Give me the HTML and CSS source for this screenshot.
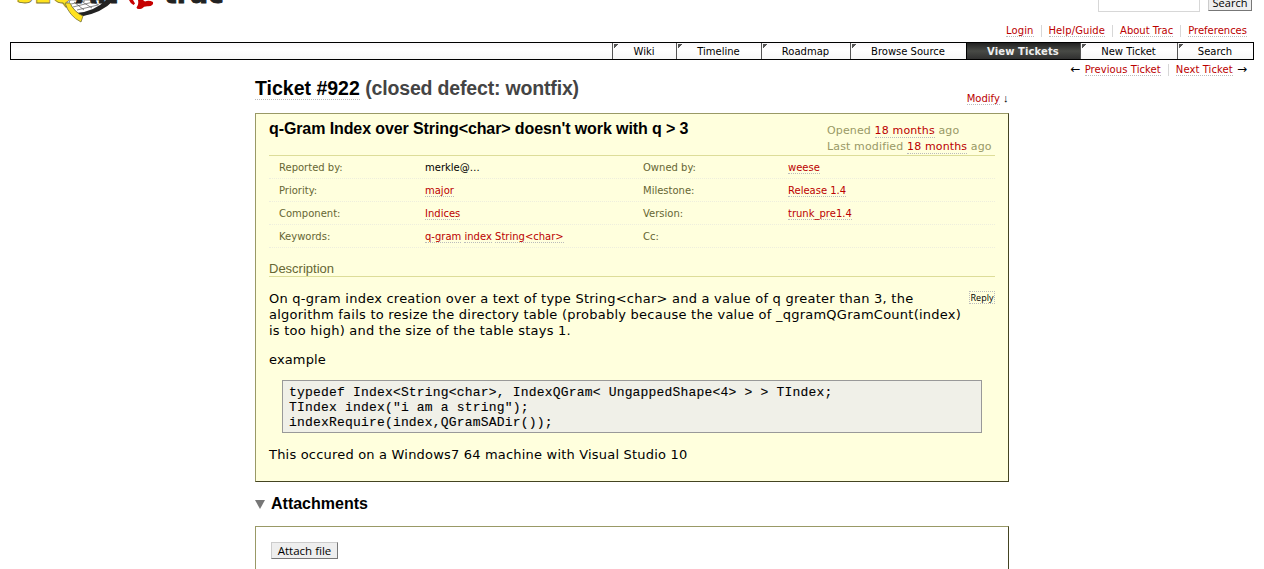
FILE: index.html
```html
<!DOCTYPE html>
<html lang="en">
<head>
<meta charset="utf-8">
<title>#922 (q-Gram Index over String&lt;char&gt; doesn't work with q &gt; 3)</title>
<link rel="stylesheet" href="styles.css">
</head>
<body>
<header class="banner">
  <svg class="logo" width="240" height="24" viewBox="0 0 240 24">
    <path d="M69 3Q73 10 81 16Q98 12 112 0H70Z" fill="#fff" stroke="#444" stroke-width=".6"/>
    <path d="M71 4L85 1M73 7L93 2M77 10L98 5M74 2L84 10M81 1L92 8M90 1L99 5" stroke="#555" stroke-width=".7" fill="none"/>
    <path d="M114 0Q102 13 81 16.5L76 13Q94 12 106 0Z" fill="#222"/>
    <text class="logo-seq" x="16" y="3" textLength="57" lengthAdjust="spacingAndGlyphs">SEQ</text>
    <text class="logo-an" x="76" y="3" textLength="43" lengthAdjust="spacingAndGlyphs">AN</text>
    <path d="M65 3Q69 16 81 22L83 16Q74 12 70 3Z" fill="#ffe21f" stroke="#77733c" stroke-width=".8"/>
    <path d="M129 0H133L135 3.5L133.5 5Q130 3 129 0ZM138 0H143L145 1.5Q149 0 153 2Q154 6 148 6.3Q144 6 142 8.5Q137 10 136.5 7.5Q139 4 138 0Z" fill="#c60000"/>
    <text class="logo-trac" x="164" y="3" textLength="60" lengthAdjust="spacingAndGlyphs">trac</text>
  </svg>
  <form class="search">
    <input class="field" type="text" aria-label="Search terms">
    <button class="button" type="button">Search</button>
  </form>
</header>
<nav class="metanav">
  <span class="item"><a href="#">Login</a></span><span class="item"><a href="#">Help/Guide</a></span><span class="item"><a href="#">About Trac</a></span><span class="item"><a href="#">Preferences</a></span>
</nav>
<nav class="mainnav">
  <a class="tab wiki" href="#">Wiki</a><a class="tab timeline" href="#">Timeline</a><a class="tab roadmap" href="#">Roadmap</a><a class="tab browse" href="#">Browse Source</a><a class="tab active" href="#">View Tickets</a><a class="tab new" href="#">New Ticket</a><a class="tab find" href="#">Search</a>
</nav>
<nav class="ctxtnav">
  <span class="item"><i class="arrow">←</i> <a href="#">Previous Ticket</a></span><span class="item"><a href="#">Next Ticket</a> <i class="arrow">→</i></span>
</nav>
<main class="content">
  <div class="heading">
    <h1><a href="#">Ticket #922</a> <span class="status">(closed defect: wontfix)</span></h1>
    <div class="modify"><a href="#">Modify</a> <i class="arrow down">↓</i></div>
  </div>
  <section class="ticket">
    <div class="summary">
      <h2>q-Gram Index over String&lt;char&gt; doesn't work with q &gt; 3</h2>
      <div class="date">
        <p>Opened <a href="#">18 months</a> ago</p>
        <p>Last modified <a href="#">18 months</a> ago</p>
      </div>
    </div>
    <div class="properties">
      <div class="row"><span class="label">Reported by:</span><span>merkle@…</span><span class="label">Owned by:</span><span><a href="#">weese</a></span></div>
      <div class="row"><span class="label">Priority:</span><span><a href="#">major</a></span><span class="label">Milestone:</span><span><a href="#">Release 1.4</a></span></div>
      <div class="row"><span class="label">Component:</span><span><a href="#">Indices</a></span><span class="label">Version:</span><span><a href="#">trunk_pre1.4</a></span></div>
      <div class="row"><span class="label">Keywords:</span><span><a href="#">q-gram</a> <a href="#">index</a> <a href="#">String&lt;char&gt;</a></span><span class="label">Cc:</span><span></span></div>
    </div>
    <h3>Description</h3>
    <div class="description">
      <p class="intro">On q-gram index creation over a text of type String&lt;char&gt; and a value of q greater than 3, the<br>algorithm fails to resize the directory table (probably because the value of _qgramQGramCount(index)<br>is too high) and the size of the table stays 1.</p>
      <button class="reply" type="button">Reply</button>
    </div>
    <p class="example">example</p>
    <pre class="code">typedef Index&lt;String&lt;char&gt;, IndexQGram&lt; UngappedShape&lt;4&gt; &gt; &gt; TIndex;
TIndex index("i am a string");
indexRequire(index,QGramSADir());</pre>
    <p class="closing">This occured on a Windows7 64 machine with Visual Studio 10</p>
  </section>
  <h2 class="attachments-title"><svg width="10" height="9" viewBox="0 0 10 9"><path d="M0 0H10L5 9Z" fill="#777"/></svg>Attachments</h2>
  <section class="attachments"><button class="button attach" type="button">Attach file</button></section>
</main>
</body>
</html>
```
FILE: styles.css
```css
* { box-sizing: border-box; }
html { overflow: hidden; }
body {
  margin: 0;
  height: 569px;
  overflow: hidden;
  background: #fff;
  color: #000;
  font: 13px/16px Verdana, "DejaVu Sans", sans-serif;
}
h1, h2, h3, p, pre { margin: 0; }
a { color: #b00; text-decoration: none; border-bottom: 1px dotted #bbb; }
.arrow { display: inline-block; width: 11px; font-style: normal; font-size: 12px; line-height: 10px; color: #000; }
.down { width: 6px; font: 11px/10px "Liberation Sans", sans-serif; }

.banner { display: flex; justify-content: space-between; align-items: flex-start; height: 25px; padding-right: 12px; }
.logo { display: block; overflow: hidden; }
.logo text { font: bold 28px "DejaVu Sans", sans-serif; fill: #222; stroke: #222; stroke-width: .8px; }
.logo .logo-seq { fill: #ffe21f; stroke: #77733c; }
.search { display: flex; align-items: flex-start; gap: 8px; margin-top: -6px; }
.field { width: 102px; height: 18px; border: 1px solid #d7d7d7; padding: 0; background: #fff; }
.button {
  height: 17px;
  padding: 0;
  border: 1px solid #ccc;
  border-right-color: #777;
  border-bottom-color: #777;
  background: #eee;
  color: #000;
  font: 11px/15px "Open Sans", "Noto Sans", sans-serif;
  text-align: center;
  white-space: nowrap;
}
.search .button { width: 44px; }

.metanav, .ctxtnav { display: flex; justify-content: flex-end; font-size: 10px; line-height: 12px; }
.metanav { height: 17px; padding-right: 17px; }
.metanav .item:first-child { letter-spacing: .1px; }
.metanav .item:nth-child(2) { letter-spacing: .1px; }
.item { height: 12px; white-space: nowrap; padding: 0 7px; border-right: 1px solid #d7d7d7; }
.item:last-child { padding-right: 0; border-right: 0; }
.ctxtnav { padding: 4px 16px 0 0; height: 20px; }
.ctxtnav a { letter-spacing: .08px; }
.ctxtnav .item:last-child .arrow { margin-left: 1px; }

.mainnav {
  display: flex;
  justify-content: flex-end;
  height: 18px;
  margin: 0 10px;
  border: 1px solid #000;
  background: linear-gradient(#faf8fa, #fff 40%, #f7f7f7);
  font-size: 10px;
  line-height: 17px;
}
.tab {
  height: 16px;
  padding-right: 1px;
  border: 0;
  border-left: 1px solid #555;
  color: #000;
  text-align: center;
  white-space: nowrap;
  background: linear-gradient(135deg, #555 3px, transparent 3.5px) 1px 1px / 5px 5px no-repeat;
}
.wiki { width: 64px; }
.timeline { width: 85px; }
.roadmap { width: 89px; }
.browse { width: 116px; }
.active { width: 114px; border-left-color: #000; background: linear-gradient(#222, #484a46 50%, #303030); color: #eee; font-weight: bold; letter-spacing: .1px; }
.new { width: 97px; }
.find { width: 76px; }

.content { width: 754px; margin-left: 255px; }
.heading { display: flex; justify-content: space-between; height: 33px; }
h1 { font: bold 19.5px/22px Arial, "Liberation Sans", sans-serif; margin-top: -3px; white-space: nowrap; }
h1 a { color: #000; }
.status { color: #444; letter-spacing: -.17px; }
.modify { font-size: 10px; line-height: 12px; margin-top: 13px; white-space: nowrap; }

.ticket {
  height: 369px;
  padding: 6px 13px 0;
  border: 1px solid #996;
  border-right-color: #442;
  border-bottom-color: #442;
  background: #ffd;
}
.summary { display: flex; justify-content: space-between; height: 36px; border-bottom: 1px solid #dd9; }
.summary h2 { font: bold 16px/18px Arial, "Liberation Sans", sans-serif; letter-spacing: -.1px; white-space: nowrap; }
.date { width: 168px; padding-top: 3px; font-size: 11px; line-height: 16px; letter-spacing: .14px; color: #996; white-space: nowrap; }
.row {
  display: grid;
  grid-template-columns: 146px 218px 145px 1fr;
  height: 23px;
  padding: 6px 0 0 10px;
  border-bottom: 1px dotted #eed;
  font-size: 10px;
  line-height: 12px;
}
.label { color: #663; }
h3 { margin-top: 12px; height: 17px; border-bottom: 1px solid #dd9; color: #663; font: 13px/18px Arial, "Liberation Sans", sans-serif; }
.description { display: flex; justify-content: space-between; align-items: flex-start; padding-top: 14px; }
.intro { white-space: nowrap; letter-spacing: .24px; }
.reply { width: 26px; height: 13px; padding: 0; border: 1px dotted #bbb; background: transparent; font: 9px/11px "Open Sans", sans-serif; color: #000; }
.example { margin-top: 13px; letter-spacing: .14px; }
.code {
  height: 53px;
  margin: 12px 13px 0;
  padding: 4px 6px;
  border: 1px solid #999;
  background: #f0f0e8;
  font: 13px/15px "Courier New", "Liberation Mono", monospace;
  letter-spacing: .19px;
  -webkit-text-stroke: .1px #000;
}
.closing { margin-top: 14px; letter-spacing: .195px; }

.attachments-title { display: flex; align-items: center; gap: 6px; height: 20px; margin: 12px 0; font: bold 16px/20px Arial, "Liberation Sans", sans-serif; }
.attachments { height: 43px; padding: 15px 15px 0; border: 1px solid #996; border-right-color: #442; border-bottom: 0; }
.attach { display: block; width: 67px; font-size: 11.5px; }
```
